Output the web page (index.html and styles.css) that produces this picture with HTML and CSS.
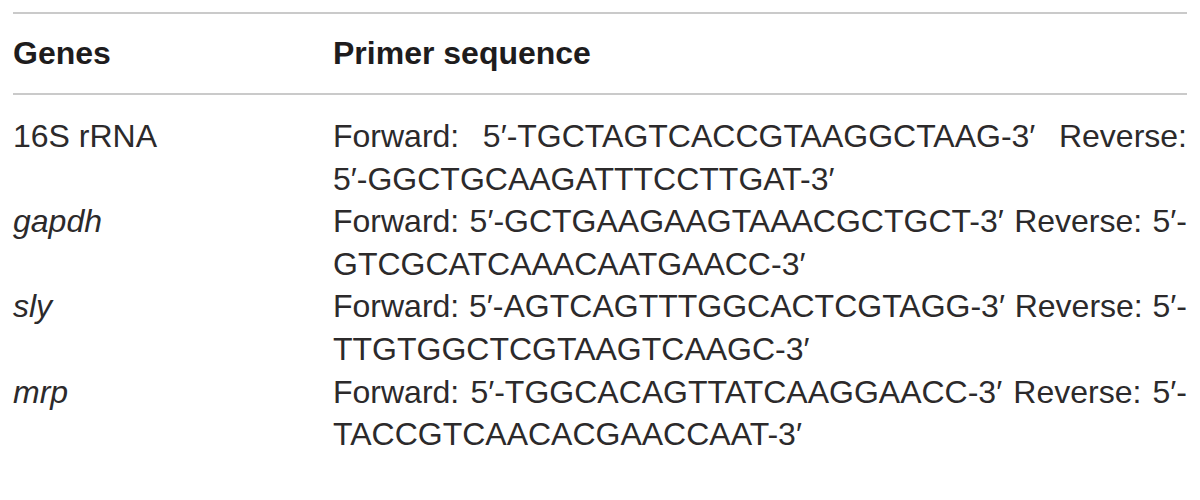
FILE: index.html
```html
<!DOCTYPE html>
<html>
<head>
<meta charset="utf-8">
<link rel="stylesheet" href="styles.css">
</head>
<body>
<table class="primers">
  <thead>
    <tr>
      <th class="col-gene">Genes</th>
      <th class="col-seq">Primer sequence</th>
    </tr>
  </thead>
  <tbody>
    <tr>
      <td class="col-gene">16S rRNA</td>
      <td class="col-seq">Forward: 5′-TGCTAGTCACCGTAAGGCTAAG-3′ Reverse: <span class="nw">5′-GGCTGCAAGATTTCCTTGAT-3′</span></td>
    </tr>
    <tr>
      <td class="col-gene"><em>gapdh</em></td>
      <td class="col-seq">Forward: 5′-GCTGAAGAAGTAAACGCTGCT-3′ Reverse: 5′-GTCGCATCAAACAATGAACC-3′</td>
    </tr>
    <tr>
      <td class="col-gene"><em>sly</em></td>
      <td class="col-seq">Forward: 5′-AGTCAGTTTGGCACTCGTAGG-3′ Reverse: 5′-TTGTGGCTCGTAAGTCAAGC-3′</td>
    </tr>
    <tr>
      <td class="col-gene"><em>mrp</em></td>
      <td class="col-seq">Forward: 5′-TGGCACAGTTATCAAGGAACC-3′ Reverse: 5′-TACCGTCAACACGAACCAAT-3′</td>
    </tr>
  </tbody>
</table>
</body>
</html>
```
FILE: styles.css
```css
html, body {
  margin: 0;
  padding: 0;
  background: #ffffff;
}
body {
  padding: 12px 13px 0 13px;
  font-family: "Liberation Sans", Arial, sans-serif;
  color: #2c2a2b;
}
.primers {
  width: 1174px;
  border-collapse: collapse;
  border-top: 2px solid #cacaca;
}
.primers th {
  font-size: 32px;
  font-weight: bold;
  text-align: left;
  line-height: 40px;
  padding: 19px 0 20px 0;
  border-bottom: 2px solid #cacaca;
  color: #1e1c1d;
}
.primers td {
  font-size: 32px;
  line-height: 42.6px;
  padding: 0;
  vertical-align: top;
}
.primers tbody tr:first-child td {
  padding-top: 20px;
}
.col-gene {
  width: 320px;
}
.col-seq {
  text-align: justify;
}
.primers em {
  font-style: italic;
}
.nw {
  white-space: nowrap;
}
```
